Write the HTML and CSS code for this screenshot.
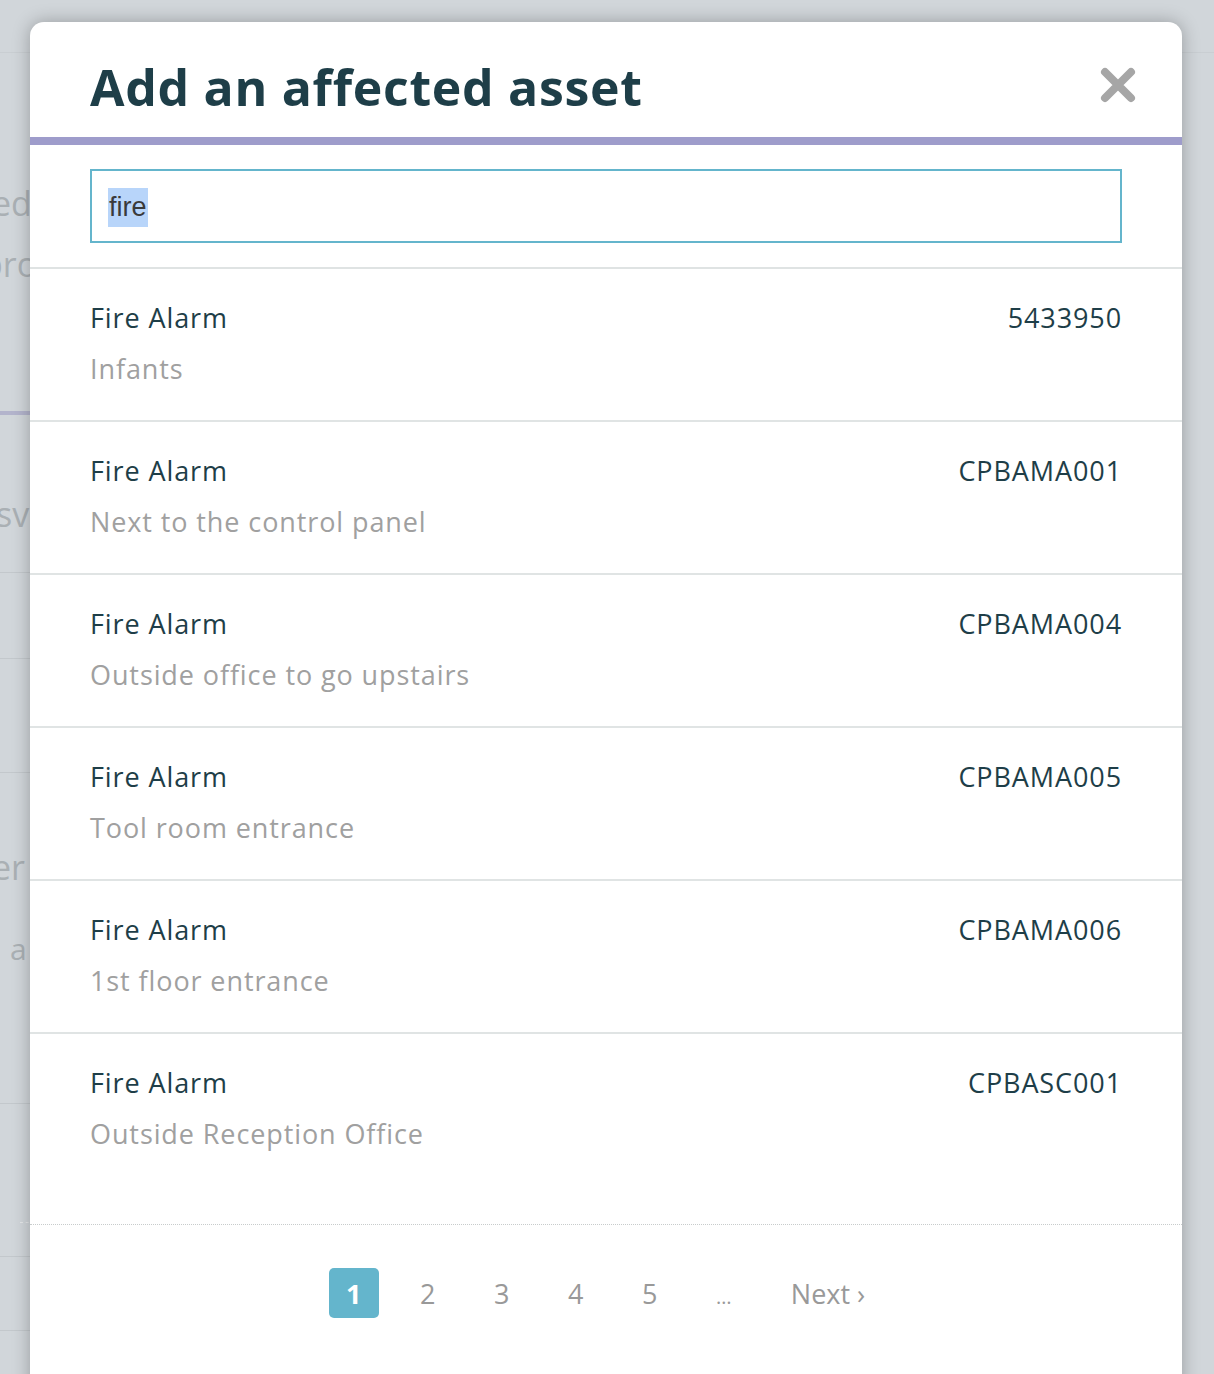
FILE: index.html
```html
<!DOCTYPE html>
<html>
<head>
<meta charset="utf-8">
<link rel="stylesheet" href="styles.css">
</head>
<body>
<div class="page">
  <div class="bg">
    <div class="bg-line bg-top"></div>
    <div class="bg-text t1">ed</div>
    <div class="bg-text t2">pro</div>
    <div class="bg-purple"></div>
    <div class="bg-text t3">sv</div>
    <div class="bg-line l1"></div>
    <div class="bg-line l2"></div>
    <div class="bg-line l3"></div>
    <div class="bg-text t4">er</div>
    <div class="bg-text t5">a</div>
    <div class="bg-line l4"></div>
    <div class="bg-dots"></div>
    <div class="bg-line l5"></div>
    <div class="bg-line l6"></div>
  </div>

  <div class="modal">
    <div class="modal-header">
      <h1 class="modal-title">Add an affected asset</h1>
      <button class="close" aria-label="Close">
        <svg width="36" height="36" viewBox="0 0 36 36"><path d="M5 5 L31 31 M31 5 L5 31" stroke="#a6a6a6" stroke-width="8" stroke-linecap="round"/></svg>
      </button>
    </div>
    <div class="search-wrap">
      <div class="search"><span class="sel">fire</span></div>
    </div>
    <ul class="list">
      <li class="item"><div class="item-top"><span class="name">Fire Alarm</span><span class="code">5433950</span></div><div class="loc">Infants</div></li>
      <li class="item"><div class="item-top"><span class="name">Fire Alarm</span><span class="code">CPBAMA001</span></div><div class="loc">Next to the control panel</div></li>
      <li class="item thick"><div class="item-top"><span class="name">Fire Alarm</span><span class="code">CPBAMA004</span></div><div class="loc">Outside office to go upstairs</div></li>
      <li class="item"><div class="item-top"><span class="name">Fire Alarm</span><span class="code">CPBAMA005</span></div><div class="loc">Tool room entrance</div></li>
      <li class="item"><div class="item-top"><span class="name">Fire Alarm</span><span class="code">CPBAMA006</span></div><div class="loc">1st floor entrance</div></li>
      <li class="item last"><div class="item-top"><span class="name">Fire Alarm</span><span class="code">CPBASC001</span></div><div class="loc">Outside Reception Office</div></li>
    </ul>
    <div class="pager">
      <span class="pg active">1</span>
      <span class="pg">2</span>
      <span class="pg">3</span>
      <span class="pg">4</span>
      <span class="pg">5</span>
      <span class="pg dots">…</span>
      <span class="pg next">Next ›</span>
    </div>
  </div>
</div>
</body>
</html>
```
FILE: styles.css
```css
html, body {
  margin: 0;
  padding: 0;
}
body {
  background: #d1d6da;
  font-family: "Open Sans", "Lato", sans-serif;
  width: 1214px;
  height: 1374px;
  overflow: hidden;
}
.page {
  position: relative;
  width: 1214px;
  height: 1374px;
}
.bg {
  position: absolute;
  inset: 0;
}
.bg-line {
  position: absolute;
  left: 0;
  width: 40px;
  height: 1px;
  background: #c3c8cc;
}
.bg-top { top: 52px; width: 1214px; background: #c9ced2; }
.l1 { top: 572px; }
.l2 { top: 658px; }
.l3 { top: 772px; }
.l4 { top: 1103px; }
.l5 { top: 1256px; }
.l6 { top: 1330px; }
.bg-purple {
  position: absolute;
  top: 411px;
  left: 0;
  width: 40px;
  height: 4px;
  background: #b3b4cc;
}
.bg-dots {
  position: absolute;
  top: 1222px;
  left: 20px;
  width: 20px;
  border-top: 1px dashed #e6e8ea;
}
.bg-text {
  position: absolute;
  color: #aab0b4;
  font-family: "Open Sans", sans-serif;
  font-size: 34px;
  line-height: 1;
}
.t1 { top: 186px; left: -8px; }
.t2 { top: 247px; left: -18px; }
.t3 { top: 497px; left: -4px; }
.t4 { top: 850px; left: -8px; }
.t5 { top: 934px; left: 10px; font-size: 30px; }

.modal {
  position: absolute;
  top: 22px;
  left: 30px;
  width: 1152px;
  height: 1380px;
  background: #fff;
  border-radius: 14px 14px 0 0;
  box-shadow: 0 0 18px rgba(0, 0, 0, 0.28);
  overflow: hidden;
}
.modal-header {
  height: 115px;
  border-bottom: 8px solid #9e9ccb;
  display: flex;
  align-items: center;
  justify-content: space-between;
  padding: 0 46px 0 60px;
}
.modal-title {
  margin: 0;
  padding-top: 14px;
  font-size: 50px;
  font-weight: 700;
  color: #1e3e48;
  letter-spacing: 0.7px;
  line-height: 1.2;
}
.close {
  border: 0;
  background: none;
  padding: 0;
  margin-top: 10px;
  width: 36px;
  height: 36px;
  cursor: pointer;
}
.search-wrap {
  padding: 24px 60px 24px 60px;
  border-bottom: 2px solid #dfe3e3;
}
.search {
  height: 70px;
  border: 2px solid #64b5cc;
  display: flex;
  align-items: center;
  padding-left: 16px;
  padding-top: 3px;
  box-sizing: border-box;
  height: 74px;
  font-family: "Liberation Sans", sans-serif;
  font-size: 27px;
  color: #3a3a3a;
}
.sel {
  background: #b8d5fa;
  padding: 4px 1px;
}
.list {
  list-style: none;
  margin: 0;
  padding: 0;
}
.item {
  height: 153px;
  border-bottom: 2px solid #e0e4e4;
  padding: 32px 60px 0 60px;
  box-sizing: border-box;
}
.item.last {
  height: 191px;
  border-bottom: 1px dotted #c8cccc;
}
.item-top {
  display: flex;
  justify-content: space-between;
  align-items: baseline;
  font-size: 27px;
  color: #1e3e48;
  line-height: 34px;
  letter-spacing: 0.9px;
}
.loc {
  margin-top: 17px;
  font-size: 27px;
  color: #a0a0a0;
  line-height: 34px;
  letter-spacing: 0.9px;
}
.pager {
  display: flex;
  justify-content: center;
  align-items: center;
  padding-top: 40px;
  padding-right: 18px;
}
.pg {
  min-width: 50px;
  height: 50px;
  margin: 0 12px;
  display: flex;
  align-items: center;
  justify-content: center;
  font-size: 27px;
  color: #999;
}
.pg.active {
  background: #64b5cc;
  color: #fff;
  border-radius: 5px;
  font-weight: 700;
}
.pg.dots { font-size: 20px; padding-top: 6px; }
.pg.next { margin-left: 30px; }
```
